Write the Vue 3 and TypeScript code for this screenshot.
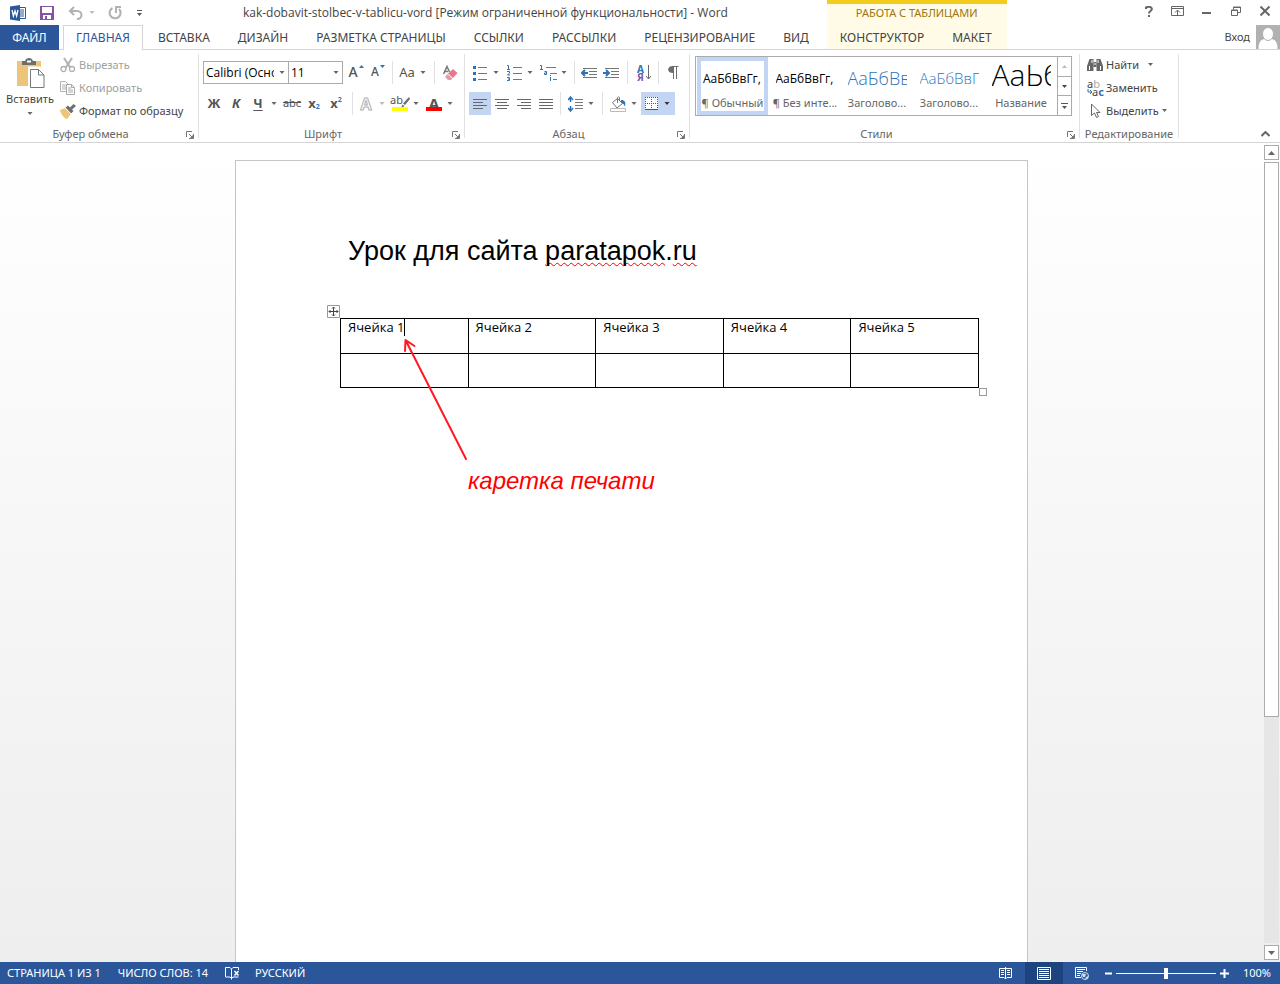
<script setup lang="ts">
import { ref } from 'vue'

interface StyleItem { sample: string; name: string; kind: string }

const tabs: string[] = ['ГЛАВНАЯ', 'ВСТАВКА', 'ДИЗАЙН', 'РАЗМЕТКА СТРАНИЦЫ', 'ССЫЛКИ', 'РАССЫЛКИ', 'РЕЦЕНЗИРОВАНИЕ', 'ВИД']
const tableTabs: string[] = ['КОНСТРУКТОР', 'МАКЕТ']
const activeTab = ref<string>('ГЛАВНАЯ')

const styleItems: StyleItem[] = [
  { sample: 'АаБбВвГг,', name: '¶ Обычный', kind: 'body' },
  { sample: 'АаБбВвГг,', name: '¶ Без инте...', kind: 'body' },
  { sample: 'АаБбВв', name: 'Заголово...', kind: 'h1' },
  { sample: 'АаБбВвГ', name: 'Заголово...', kind: 'h2' },
  { sample: 'АаЬб', name: 'Название', kind: 'big' },
]
const activeStyle = ref<number>(0)
const cells: string[] = ['Ячейка 1', 'Ячейка 2', 'Ячейка 3', 'Ячейка 4', 'Ячейка 5']
const fontName = ref<string>('Calibri (Основной текст)')
const fontSize = ref<string>('11')
const zoom = ref<number>(100)
</script>

<template>
  <div class="app">
    <svg class="sprite" aria-hidden="true">
      <symbol id="dd" viewBox="0 0 5 3"><path d="M0 0h5L2.500 3z" fill="currentColor" /></symbol>
      <symbol id="launch" viewBox="0 0 8 8"><path d="M.5 6V.5H6M3 3l4 4M7.5 3v4.500H3" fill="none" stroke="#777" /><path d="M7 4v3H4z" fill="#777" /></symbol>
    </svg>

    <header class="top">
      <div class="titlebar">
        <div class="quick">
          <svg class="wordlogo" width="16" height="16" viewBox="0 0 16 16">
            <path d="M9 2.500h6.500v11H9z" fill="#fff" stroke="#2b579a" />
            <path d="M10 5h4M10 7h4M10 9h4M10 11h4" stroke="#2b579a" />
            <path d="M0 1.500L10 0v16L0 14.500z" fill="#2b579a" />
            <path d="M2 5l1.400 6L5 6l1.600 5L8 5" fill="none" stroke="#fff" stroke-width="1.300" />
          </svg>
          <button class="q save" aria-label="Сохранить">
            <svg width="14" height="14" viewBox="0 0 14 14"><path d="M0 0h14v14H0z" fill="#8552a5" /><path d="M2 1h10v6H2zM3 9h8v4H3z" fill="#fff" /><path d="M5 10h2v3H5z" fill="#8552a5" /></svg>
          </button>
          <button class="q undo" aria-label="Отменить">
            <svg width="15" height="14" viewBox="0 0 15 14"><path d="M6 1L2 5l4 4M2 5h7c6 0 6 8 0 8" fill="none" stroke="#b1b1b1" stroke-width="2" /></svg>
            <svg class="dd pale" width="5" height="3"><use href="#dd" /></svg>
          </button>
          <button class="q redo" aria-label="Повторить">
            <svg width="14" height="14" viewBox="0 0 14 14"><path d="M4.500 2A5.500 5.500 0 1 0 11 3" fill="none" stroke="#b1b1b1" stroke-width="2" /><path d="M8 7V1h5" fill="none" stroke="#b1b1b1" stroke-width="2" /></svg>
          </button>
          <button class="q more" aria-label="Настройка панели быстрого доступа">
            <svg width="5" height="6" viewBox="0 0 5 6"><path d="M0 0h5v1H0zM0 3h5L2.500 6z" fill="#555" /></svg>
          </button>
        </div>
        <div class="title">kak-dobavit-stolbec-v-tablicu-vord [Режим ограниченной функциональности] - Word</div>
      </div>

      <nav class="tabs" aria-label="Лента">
        <button class="file">ФАЙЛ</button>
        <button v-for="t in tabs" :key="t" class="tab" :class="{ active: t === activeTab }" @click="activeTab = t">{{ t }}</button>
      </nav>

      <div class="context">
        <div class="context-title">РАБОТА С ТАБЛИЦАМИ</div>
        <div class="context-tabs">
          <button v-for="t in tableTabs" :key="t" class="tab">{{ t }}</button>
        </div>
      </div>

      <div class="window">
        <button aria-label="Справка"><svg width="8" height="11" viewBox="0 0 8 11"><path d="M1 3V1.500Q4 0 6 1.500T5.500 5Q4 6 4 7.500M4 9v2" fill="none" stroke="#666" stroke-width="2" /></svg></button>
        <button aria-label="Параметры ленты"><svg width="13" height="10" viewBox="0 0 13 10"><path d="M.5.5h12v9H.5zM1 2.500h11" fill="none" stroke="#666" /><path d="M6.500 9V4.500M4 6.500L6.500 4 9 6.500" fill="none" stroke="#666" /></svg></button>
        <button aria-label="Свернуть"><svg width="9" height="10" viewBox="0 0 9 10"><path d="M0 6h9v2H0z" fill="#666" /></svg></button>
        <button aria-label="Восстановить"><svg width="10" height="10" viewBox="0 0 10 10"><path d="M.5 4h6v5.500h-6zM2.500 3.500V1h7v5.500h-3M2.500 1.500h7M.5 4.500h6" fill="none" stroke="#666" /></svg></button>
        <button aria-label="Закрыть"><svg width="10" height="10" viewBox="0 0 10 10"><path d="M.5.5l9 9M9.500.5l-9 9" stroke="#666" stroke-width="2" /></svg></button>
      </div>

      <div class="account">
        <a href="#">Вход</a>
        <svg width="24" height="24" viewBox="0 0 24 24"><path d="M0 0h24v24H0z" fill="#b1b1b1" /><path d="M2.500 24c0-8 3-9.500 6-10h7c3 .5 6 2 6 10z" fill="#fff" /><ellipse cx="12" cy="9" rx="5.500" ry="6.500" fill="#fff" stroke="#b1b1b1" /></svg>
      </div>
    </header>

    <section class="ribbon">
      <div class="group clipboard">
        <div class="content clip">
          <button class="paste">
            <svg width="29" height="30" viewBox="0 0 29 30"><path d="M1 3h24v25H1z" fill="#ecc57a" /><path d="M6 3h3c1-4 7-4 8 0h3v4H6z" fill="#6e6e6e" /><path d="M11 2.500h4v2h-4z" fill="#fff" /><path d="M13.500 10h10l5 5v14.500h-15z" fill="#fff" stroke="#fff" stroke-width="3" /><path d="M14.500 11.500h8l5.500 5.500v12.500H14.500zM22.500 11.500V17H28" fill="#fff" stroke="#777" /></svg>
            <span>Вставить</span>
            <svg class="dd" width="5" height="3"><use href="#dd" /></svg>
          </button>
          <div class="list">
            <button class="off"><svg width="16" height="16" viewBox="0 0 16 16"><path d="M4 1l6.500 10M12 1L5.500 11" stroke="#b1b1b1" stroke-width="2" /><circle cx="3.500" cy="12" r="2.500" fill="none" stroke="#b1b1b1" stroke-width="1.300" /><circle cx="12" cy="12" r="2.500" fill="none" stroke="#b1b1b1" stroke-width="1.300" /></svg><span>Вырезать</span></button>
            <button class="off"><svg width="16" height="16" viewBox="0 0 16 16"><path d="M.5 1.500h5l3 3v7h-8zM2 5h4M2 7h4M2 9h4" fill="none" stroke="#b1b1b1" /><path d="M6.500 4.500h5l3 3v7h-8zM11.500 4.500v3h3M8 8h3M8 10h5M8 12h5" fill="#fff" stroke="#a8a8a8" /></svg><span>Копировать</span></button>
            <button><svg width="16" height="16" viewBox="0 0 16 16"><path d="M0 7l5-2 6 6-4 5c-3-.5-6-4.500-7-9z" fill="#ecc57a" /><path d="M5.500 4.500l2.500-2 5.500 5.500-2.500 2.500z" fill="#6e6e6e" /><path d="M9.500 5L13.500 1 16 3l-4.500 4z" fill="#6e6e6e" /><path d="M5 5l6 6" stroke="#fff" /></svg><span>Формат по образцу</span></button>
          </div>
        </div>
        <div class="label">Буфер обмена<svg width="8" height="8"><use href="#launch" /></svg></div>
      </div>

      <div class="group font">
        <div class="content">
          <div class="row">
            <div class="combo family"><select v-model="fontName" aria-label="Шрифт"><option>Calibri (Основной текст)</option><option>Arial</option></select><svg class="dd" width="5" height="3"><use href="#dd" /></svg></div>
            <div class="combo size"><select v-model="fontSize" aria-label="Размер шрифта"><option>11</option><option>12</option></select><svg class="dd" width="5" height="3"><use href="#dd" /></svg></div>
            <button class="tb grow" aria-label="Увеличить размер">A<svg width="5" height="3" viewBox="0 0 5 3"><path d="M0 3L2.500 0 5 3z" fill="#2e74b5" /></svg></button>
            <button class="tb grow small" aria-label="Уменьшить размер">A<svg width="5" height="3" viewBox="0 0 5 3"><path d="M0 0h5L2.500 3z" fill="#2e74b5" /></svg></button>
            <i class="vs"></i>
            <button class="tb case">Aa</button><svg class="dd" width="5" height="3"><use href="#dd" /></svg>
            <i class="vs mid"></i>
            <button class="tb" aria-label="Очистить форматирование"><svg width="16" height="16" viewBox="0 0 16 16"><path d="M1.500 9L5 1.500 7.500 7M2.500 6.500H6" fill="none" stroke="#777" stroke-width="1.500" /><path d="M11 4l4.500 4-4.500 5-5-4.500z" fill="#e8798b" /><path d="M5.500 9l5 4.500-1.500 1.500H6L3 12z" fill="#ee99a7" /></svg></button>
          </div>
          <div class="row">
            <button class="tb b">Ж</button>
            <button class="tb b it">К</button>
            <button class="tb b un">Ч</button><svg class="dd" width="5" height="3"><use href="#dd" /></svg>
            <button class="tb strike">abc</button>
            <button class="tb b x">x<sub>2</sub></button>
            <button class="tb b x">x<sup>2</sup></button>
            <i class="vs fx"></i>
            <button class="tb outline">A</button><svg class="dd pale" width="5" height="3"><use href="#dd" /></svg>
            <button class="tb mark yellow"><span>ab</span><svg width="9" height="11" viewBox="0 0 9 11"><path d="M8 0l1 2-5 6-2-1.500zM1.500 7.500l2 1.500L1 11H0z" fill="#6e6e6e" /></svg></button><svg class="dd" width="5" height="3"><use href="#dd" /></svg>
            <button class="tb mark red"><b>A</b></button><svg class="dd" width="5" height="3"><use href="#dd" /></svg>
          </div>
        </div>
        <div class="label">Шрифт<svg width="8" height="8"><use href="#launch" /></svg></div>
      </div>

      <div class="group para">
        <div class="content">
          <div class="row">
            <button class="tb" aria-label="Маркеры"><svg width="14" height="16" viewBox="0 0 14 16"><path d="M5 2.500h9M5 8.500h9M5 14.500h9" stroke="#777" /><path d="M0 1h3v3H0zM0 7h3v3H0zM0 13h3v3H0z" fill="#2e74b5" /></svg></button><svg class="dd" width="5" height="3"><use href="#dd" /></svg>
            <button class="tb" aria-label="Нумерация"><svg width="15" height="16" viewBox="0 0 15 16"><path d="M6 2.500h9M6 8.500h9M6 14.500h9" stroke="#777" /><path d="M0 .5h1.500V4M0 4.500h3M0 6.500h2.500v1.500L.5 10H3M0 12.500h2.500v3H0M1 14h1" fill="none" stroke="#2e74b5" /></svg></button><svg class="dd" width="5" height="3"><use href="#dd" /></svg>
            <button class="tb" aria-label="Многоуровневый список"><svg width="17" height="16" viewBox="0 0 17 16"><path d="M6 2.500h10M10 8.500h7M13 14.500h4" stroke="#777" /><path d="M0 .5h1.500V4M0 4.500h3M4.500 6.500h2v3h-2V8h2M10.500 12v4M10.500 10v1" fill="none" stroke="#2e74b5" /></svg></button><svg class="dd" width="5" height="3"><use href="#dd" /></svg>
            <i class="vs"></i>
            <button class="tb" aria-label="Уменьшить отступ"><svg width="16" height="12" viewBox="0 0 16 12"><path d="M2 1.500h14M8 4.500h8M8 7.500h8M2 10.500h14" stroke="#777" /><path d="M1 6h6M4 3L1 6l3 3" fill="none" stroke="#2e74b5" stroke-width="2" /></svg></button>
            <button class="tb" aria-label="Увеличить отступ"><svg width="16" height="12" viewBox="0 0 16 12"><path d="M2 1.500h14M8 4.500h8M8 7.500h8M2 10.500h14" stroke="#777" /><path d="M0 6h6M3 3l3 3-3 3" fill="none" stroke="#2e74b5" stroke-width="2" /></svg></button>
            <i class="vs wide"></i>
            <button class="tb sort" aria-label="Сортировка"><span><b>А</b><b class="ya">Я</b></span><svg width="5" height="15" viewBox="0 0 5 15"><path d="M2.500 0v14M0 11l2.500 3L5 11" fill="none" stroke="#666" /></svg></button>
            <i class="vs"></i>
            <button class="tb" aria-label="Знаки абзаца"><svg width="11" height="13" viewBox="0 0 11 13"><path d="M10.500.5H4M5.500.5V13M8.500.5V13" stroke="#6e6e6e" /><path d="M5 0v7C-1.500 7-1.500 0 5 0z" fill="#6e6e6e" /></svg></button>
          </div>
          <div class="row">
            <button class="tb on" aria-label="По левому краю"><svg width="14" height="12" viewBox="0 0 14 12"><path d="M0 1.500h14M0 4.500h10M0 7.500h14M0 10.500h10" stroke="#666" /></svg></button>
            <button class="tb" aria-label="По центру"><svg width="14" height="12" viewBox="0 0 14 12"><path d="M0 1.500h14M2 4.500h10M0 7.500h14M2 10.500h10" stroke="#666" /></svg></button>
            <button class="tb" aria-label="По правому краю"><svg width="14" height="12" viewBox="0 0 14 12"><path d="M0 1.500h14M4 4.500h10M0 7.500h14M4 10.500h10" stroke="#666" /></svg></button>
            <button class="tb" aria-label="По ширине"><svg width="14" height="12" viewBox="0 0 14 12"><path d="M0 1.500h14M0 4.500h14M0 7.500h14M0 10.500h14" stroke="#666" /></svg></button>
            <i class="vs"></i>
            <button class="tb" aria-label="Интервал"><svg width="15" height="16" viewBox="0 0 15 16"><path d="M7 3.500h8M7 6.500h8M7 9.500h8M7 12.500h8" stroke="#777" /><path d="M2.500 1v5M2.500 10v5M0 4l2.500-3L5 4M0 12l2.500 3L5 12" fill="none" stroke="#2e74b5" stroke-width="1.500" /></svg></button><svg class="dd" width="5" height="3"><use href="#dd" /></svg>
            <i class="vs mid"></i>
            <button class="tb" aria-label="Заливка"><svg width="16" height="16" viewBox="0 0 16 16"><path d="M2.500 6.500l5-4 5 5-5.500 4.500zM7.500 7V1.500q1-1.500 2 0V5" fill="none" stroke="#777" /><path d="M11 4c4 0 5 2 4 7-1-3-2-4-4-4z" fill="#2e74b5" /><path d="M.5 12.500h15v3H.5z" fill="#fff" stroke="#bbb" /></svg></button><svg class="dd" width="5" height="3"><use href="#dd" /></svg>
            <button class="tb on borders" aria-label="Границы"><svg width="13" height="13" viewBox="0 0 13 13"><path d="M0 0h13v13H0z" fill="#fff" /><path d="M0 .5h13M0 6.500h13M.5 0v12M6.500 0v12M12.500 0v12" stroke="#555" stroke-dasharray="1 1" /><path d="M0 12.500h13" stroke="#555" /></svg><svg class="dd" width="5" height="3"><use href="#dd" /></svg></button>
          </div>
        </div>
        <div class="label">Абзац<svg width="8" height="8"><use href="#launch" /></svg></div>
      </div>

      <div class="group styles">
        <div class="content gallerywrap">
          <div class="gallery">
            <button v-for="(s, i) in styleItems" :key="i" class="style" :class="{ picked: i === activeStyle }" @click="activeStyle = i">
              <span class="sample" :class="s.kind">{{ s.sample }}</span>
              <span class="name">{{ s.name }}</span>
            </button>
            <div class="scroll3">
              <button aria-label="Вверх"><svg width="5" height="3" viewBox="0 0 5 3"><path d="M0 3L2.500 0 5 3z" fill="#bbb" /></svg></button>
              <button aria-label="Вниз"><svg width="5" height="3"><use href="#dd" /></svg></button>
              <button aria-label="Все стили"><svg width="7" height="6" viewBox="0 0 7 6"><path d="M0 0h7v1H0zM1 3h5L3.500 6z" fill="#555" /></svg></button>
            </div>
          </div>
        </div>
        <div class="label">Стили<svg width="8" height="8"><use href="#launch" /></svg></div>
      </div>

      <div class="group edit">
        <div class="content">
          <div class="list">
            <button><svg width="16" height="14" viewBox="0 0 16 14"><path d="M2.500 1h4v12H0V8zM13.500 1h-4v12H16V8z" fill="#666" /><path d="M6.500 4h3v5h-3z" fill="#666" /><path d="M2.500 8v4M13.500 8v4M5 2v3M11 2v3M8 5v2" stroke="#fff" /></svg><span>Найти</span><svg class="dd far" width="5" height="3"><use href="#dd" /></svg></button>
            <button><span class="repl"><span>a<em>b</em></span><span><svg width="5" height="6" viewBox="0 0 5 6"><path d="M1 0v3h3M3 1l2 2-2 2" fill="none" stroke="#2e74b5" /></svg>a<b>c</b></span></span><span>Заменить</span></button>
            <button><svg width="16" height="16" viewBox="0 0 16 16"><path d="M4.500 1v11.500L7.500 10l2 4.500 2-1-2-4H13z" fill="#fff" stroke="#666" /></svg><span>Выделить</span><svg class="dd" width="5" height="3"><use href="#dd" /></svg></button>
          </div>
        </div>
        <div class="label">Редактирование</div>
      </div>

      <button class="collapse" aria-label="Свернуть ленту"><svg width="9" height="6" viewBox="0 0 9 6"><path d="M.5 5l4-4 4 4" fill="none" stroke="#666" stroke-width="2" /></svg></button>
    </section>

    <main class="work">
      <div class="canvas">
        <article class="page">
          <h1>Урок для сайта <u>paratapok</u>.<u>ru</u></h1>
          <div class="tablebox">
            <svg class="move" width="13" height="13" viewBox="0 0 13 13"><path d="M.5.5h12v12H.5z" fill="#fff" stroke="#999" /><path d="M6.500 2v9M2 6.500h9M5 3.500L6.500 2 8 3.500M5 9.500L6.500 11 8 9.500M3.500 5L2 6.500 3.500 8M9.500 5L11 6.500 9.500 8" fill="none" stroke="#444" /></svg>
            <table>
              <tbody>
                <tr><td v-for="(c, i) in cells" :key="c"><span :class="{ caret: i === 0 }">{{ c }}</span></td></tr>
                <tr><td v-for="c in cells" :key="c"></td></tr>
              </tbody>
            </table>
            <i class="resize"></i>
            <svg class="arrow" width="66" height="124" viewBox="0 0 66 124"><path d="M64 121L4 3M3 13L3.500 2l9 6" fill="none" stroke="#ff1a22" stroke-width="2" stroke-linecap="round" stroke-linejoin="round" /></svg>
            <p class="note">каретка печати</p>
          </div>
        </article>
      </div>
      <div class="vscroll">
        <button aria-label="Прокрутить вверх"><svg width="7" height="4" viewBox="0 0 7 4"><path d="M0 4l3.500-4L7 4z" fill="#666" /></svg></button>
        <div class="track"><div class="thumb"></div></div>
        <button aria-label="Прокрутить вниз"><svg width="7" height="4" viewBox="0 0 7 4"><path d="M0 0h7L3.500 4z" fill="#666" /></svg></button>
      </div>
    </main>

    <footer class="status">
      <button class="s-page">СТРАНИЦА 1 ИЗ 1</button>
      <button class="s-words">ЧИСЛО СЛОВ: 14</button>
      <button class="s-spell" aria-label="Правописание"><svg width="15" height="13" viewBox="0 0 15 13"><path d="M6.500 11.500L5 10H.5V.5H5l1.500 1.500L8 .5h5.500V3M6.500 2v10.500M7 11l1-1h5.500" fill="none" stroke="#fff" /><path d="M9.500 4l4 4.500M13.500 4l-4 4.500" stroke="#fff" stroke-width="1.500" /></svg></button>
      <button class="s-lang">РУССКИЙ</button>
      <div class="spacer"></div>
      <button class="view" aria-label="Режим чтения"><svg width="13" height="12" viewBox="0 0 13 12"><path d="M6.500 1.500H.5v9H5l1.500 1.500L8 10.500h4.500v-9zM6.500 0v12M2 3.500h3M2 5.500h3M2 7.500h3M8 3.500h3M8 5.500h3M8 7.500h3" fill="none" stroke="#fff" /></svg></button>
      <button class="view active" aria-label="Разметка страницы"><svg width="14" height="13" viewBox="0 0 14 13"><path d="M.5.5h13v12H.5zM2 2.500h10M2 4.500h10M2 6.500h10M2 8.500h10M2 10.500h10" fill="none" stroke="#fff" /></svg></button>
      <button class="view" aria-label="Веб-документ"><svg width="14" height="13" viewBox="0 0 14 13"><path d="M6 10.500H.5V.5h11V4M2 2.500h8M2 4.500h6M2 6.500h4M2 8.500h3" fill="none" stroke="#fff" /><circle cx="10" cy="9" r="3.500" fill="#2b579a" stroke="#d5e0f0" /><path d="M7 7l4 0-1 3-2 0zM10 11l3-2v2l-2 1z" fill="#d5e0f0" /></svg></button>
      <button class="zb" aria-label="Уменьшить масштаб"><svg width="7" height="9" viewBox="0 0 7 9"><path d="M0 3.500h7v2H0z" fill="#fff" /></svg></button>
      <input v-model.number="zoom" class="zoom" type="range" min="0" max="200" aria-label="Масштаб">
      <button class="zb plus" aria-label="Увеличить масштаб"><svg width="9" height="9" viewBox="0 0 9 9"><path d="M0 3.500h9v2H0zM3.500 0h2v9h-2z" fill="#fff" /></svg></button>
      <button class="percent">{{ zoom }}%</button>
    </footer>
  </div>
</template>

<style>
body { margin: 0; }
</style>

<style scoped>
* { box-sizing: border-box; }
.app { min-height: 100vh; display: flex; flex-direction: column; background: #fff; color: #444; font: 11px/16px "Noto Sans", "Open Sans", sans-serif; }
.sprite { position: absolute; width: 0; height: 0; }
button { border: 0; background: none; padding: 0; margin: 0; font: inherit; color: inherit; white-space: nowrap; flex: none; }
svg { flex: none; display: block; }
.dd { color: #666; width: 10px; height: 3px; margin-right: 2px; }
.dd.pale { color: #bbb; }

.top { display: grid; grid-template-columns: auto auto 1fr; grid-template-rows: 25px 25px; }
.titlebar { grid-area: 1 / 1; display: flex; align-items: center; min-width: 0; }
.quick { display: flex; align-items: center; width: 144px; padding-left: 10px; height: 22px; flex: none; }
.wordlogo { margin-right: 14px; }
.q { display: flex; align-items: center; }
.save { margin-right: 14px; }
.undo { margin-right: 9px; gap: 4px; }
.redo { margin-right: 15px; }
.title { flex: 1; text-align: center; white-space: nowrap; font-family: "Open Sans", "Noto Sans", sans-serif; font-size: 12px; }
.tabs { grid-area: 2 / 1; display: flex; border-bottom: 1px solid #d5d5d5; font-size: 12px; padding-right: 4px; }
.file { width: 59px; background: #2b579a; color: #fff; margin-right: 4px; height: 25px; }
.tab { padding: 0 14px; height: 25px; }
.tab.active { color: #2b579a; background: #fff; border: 1px solid #d5d5d5; border-bottom: 0; padding: 0 12px; margin-right: 1px; }
.context { grid-area: 1 / 2 / 3 / 3; background: #fffbe6; border-top: 4px solid #f4cc1c; border-bottom: 1px solid #d5d5d5; display: flex; flex-direction: column; }
.context-title { flex: none; height: 21px; line-height: 18px; text-align: center; color: #9c7610; }
.context-tabs { display: flex; font-size: 12px; height: 24px; }
.context-tabs .tab { padding: 0 15px 0 13px; }
.window { grid-area: 1 / 3; display: flex; justify-content: flex-end; align-items: center; height: 22px; padding-right: 1px; }
.window button { width: 29px; display: flex; justify-content: center; align-items: center; height: 22px; }
.account { grid-area: 2 / 3; border-bottom: 1px solid #d5d5d5; display: flex; justify-content: flex-end; align-items: center; gap: 6px; }
.account a { color: #444; text-decoration: none; }

.ribbon { display: flex; height: 93px; border-bottom: 1px solid #d5d5d5; }
.group { position: relative; display: flex; flex-direction: column; flex: none; padding-left: 4px; }
.group::after { content: ""; position: absolute; right: 0; top: 4px; bottom: 4px; width: 1px; background: #e1e1e1; }
.clipboard { width: 199px; }
.font { width: 266px; }
.para { width: 225px; }
.styles { width: 390px; padding-left: 5px; }
.edit { width: 99px; }
.content { height: 76px; display: flex; flex-direction: column; }
.label { height: 16px; text-align: center; color: #666; padding-right: 22px; position: relative; }
.label svg { position: absolute; right: 5px; top: 5px; }
.edit .label { padding-right: 5px; }
.clip { flex-direction: row; gap: 4px; }
.paste { width: 52px; display: flex; flex-direction: column; align-items: center; padding-top: 8px; }
.paste span { padding-top: 3px; }
.paste .dd { margin: 5px 0 0; }
.list { padding-top: 3px; display: flex; flex-direction: column; }
.list button { height: 23px; display: flex; align-items: center; gap: 3px; }
.off { color: #a0a0a0; }
.row { display: flex; align-items: center; height: 23px; margin-top: 11px; }
.row + .row { margin-top: 8px; }
.tb { width: 22px; height: 23px; display: flex; align-items: center; justify-content: center; font-size: 13px; color: #555; position: relative; }
.on { background: #c2d5f2; }
.vs { width: 1px; height: 23px; background: #e1e1e1; margin: 0 3px; flex: none; }
.vs.mid { margin: 0 4px; }
.vs.wide { margin: 0 5px; }
.vs.fx { margin: 0 2px 0 5px; }
.combo { position: relative; height: 23px; flex: none; }
.combo select { appearance: none; width: 100%; height: 23px; border: 1px solid #ababab; border-radius: 0; background: #fff; color: #000; padding: 0 14px 0 2px; font: 12px/21px "Open Sans", "Noto Sans", sans-serif; outline: 0; }
.combo .dd { position: absolute; right: 2px; top: 10px; margin: 0; }
.family { width: 86px; }
.size { width: 55px; margin-left: -1px; margin-right: 2px; }
.grow { font-size: 14px; gap: 1px; font-weight: 500; }
.grow.small { font-size: 12px; }
.grow svg { align-self: flex-start; margin-top: 4px; }
.b, .case, .strike, .grow { padding-bottom: 2px; }
.b { font-weight: 700; }
.it { font-style: italic; }
.un { text-decoration: underline; text-underline-offset: 2px; }
.strike { text-decoration: line-through; font-size: 11px; }
.x sub, .x sup { font-size: 7px; line-height: 8px; color: #2e74b5; }
.x sub { align-self: flex-end; padding-bottom: 2px; }
.x sup { align-self: flex-start; padding-top: 4px; }
.outline { font-size: 16px; font-weight: 700; color: #fff; -webkit-text-stroke: 1px #b1b1b1; }
.mark { font-size: 11px; }
.mark span { line-height: 10px; padding-bottom: 7px; }
.mark svg { margin: 0 0 3px -2px; }
.mark b { font-size: 15px; padding-bottom: 2px; }
.mark::after { content: ""; position: absolute; left: 3px; right: 3px; bottom: 4px; height: 4px; }
.yellow::after { background: #ff0; }
.red::after { background: #f00; }
.sort { gap: 2px; }
.sort span { display: flex; flex-direction: column; font-size: 10px; line-height: 8px; color: #2e74b5; }
.ya { color: #8552a5; }
.borders { width: 34px; gap: 4px; }
.borders .dd { margin: 0; color: #333; }

.gallerywrap { padding-top: 6px; }
.gallery { display: flex; width: 377px; height: 60px; border: 1px solid #ababab; padding-left: 1px; }
.style { width: 72px; height: 58px; display: flex; flex-direction: column; align-items: center; border: 4px solid transparent; }
.picked { border-color: #c2d5f2; width: 71px; margin-right: 1px; }
.sample { width: 59px; height: 33px; flex: none; line-height: 35px; overflow: hidden; font-family: "Open Sans", sans-serif; color: #000; text-align: left; }
.body { font-size: 12px; }
.h1 { font-size: 18px; color: #2e74b5; font-weight: 300; }
.h2 { font-size: 15px; color: #2e74b5; font-weight: 300; }
.big { font-size: 30px; font-weight: 300; line-height: 27px; }
.name { color: #666; line-height: 18px; }
.scroll3 { margin-left: auto; width: 15px; display: flex; flex-direction: column; border-left: 1px solid #ababab; }
.scroll3 button { flex: 1; display: flex; align-items: center; justify-content: center; }
.scroll3 button + button { border-top: 1px solid #ababab; }
.edit .list { padding-left: 3px; }
.edit .far { margin-left: 6px; }
.edit .dd { margin-right: 0; width: 5px; }
.repl { width: 16px; display: flex; flex-direction: column; font-size: 11px; line-height: 8px; text-align: left; }
.repl span { display: flex; align-items: center; }
.repl em { color: #aaa; font-style: normal; }
.repl b { color: #2e74b5; }
.collapse { margin-left: auto; align-self: flex-end; padding: 0 10px 5px; }

.work { flex: 1; display: flex; background: linear-gradient(#fff, #eee); }
.canvas { flex: 1; padding-top: 17px; display: flex; justify-content: center; }
.page { width: 793px; background: #fff; border: 1px solid #c6c6c6; border-bottom: 0; padding: 74px 48px 0 104px; color: #000; }
h1 { margin: 0; padding-left: 8px; font: 27px/32px "Liberation Sans", Arial, sans-serif; }
h1 u { text-decoration: underline wavy #f00 1px; text-underline-offset: 2px; text-decoration-skip-ink: none; }
.tablebox { position: relative; margin-top: 51px; }
table { width: 100%; border-collapse: collapse; table-layout: fixed; }
td { border: 1px solid #000; height: 35px; padding: 0 0 0 7px; vertical-align: top; font: 13px/16px "Open Sans", "Noto Sans", sans-serif; }
tr + tr td { height: 34px; }
.caret { border-right: 1px solid #000; display: inline-block; height: 17px; }
.move { position: absolute; left: -13px; top: -13px; }
.resize { position: absolute; right: -8px; top: 70px; width: 8px; height: 8px; border: 1px solid #999; background: #fff; }
.arrow { position: absolute; left: 62px; top: 20px; }
.note { position: absolute; left: 128px; top: 148px; margin: 0; font: italic 24px/30px "Liberation Sans", Arial, sans-serif; color: #f00; white-space: nowrap; }
.vscroll { width: 17px; padding: 2px 1px 2px 0; display: flex; flex-direction: column; }
.vscroll button { width: 15px; height: 15px; border: 1px solid #ababab; background: #fff; display: flex; align-items: center; justify-content: center; margin-left: 1px; }
.track { flex: 1; margin: 2px 0 2px 1px; width: 15px; background: #e6e6e6; }
.thumb { height: 71%; background: #fff; border: 1px solid #ababab; }

.status { height: 22px; background: #2b579a; color: #fff; display: flex; align-items: center; padding: 0 9px 0 7px; }
.status button { height: 22px; display: flex; align-items: center; }
.s-words { margin-left: 17px; }
.s-spell { margin: 0 15px 0 17px; }
.spacer { flex: 1; }
.status .view { width: 38px; justify-content: center; }
.view.active { background: #1e4480; }
.zb { margin-left: 4px; }
.zoom { appearance: none; width: 100px; height: 12px; margin: 0 4px; background: linear-gradient(#fff, #fff) center / 100% 1px no-repeat; }
.zoom::-webkit-slider-thumb { appearance: none; width: 4px; height: 11px; background: #fff; border: 0; border-radius: 0; }
.zb.plus { margin-left: 0; }
.percent { margin-left: 14px; }
</style>
